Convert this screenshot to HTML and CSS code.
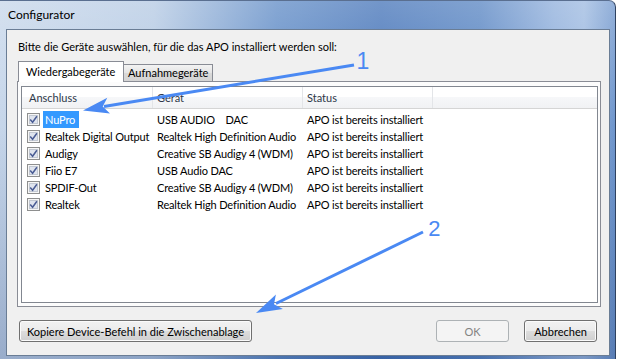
FILE: index.html
```html
<!DOCTYPE html>
<html lang="de">
<head>
    <meta charset="UTF-8">
    <title>Configurator</title>
    <link rel="stylesheet" href="styles.css">
</head>
<body>

    <svg width="0" height="0" class="defs">
        <symbol id="cb" viewBox="0 0 13 13">
            <rect x="0.5" y="0.5" width="12" height="12" fill="#f6f6f6" stroke="#8e8f8f"/>
            <rect x="2.5" y="2.5" width="8" height="8" fill="#dfe4ee" stroke="#c2c8d2"/>
            <path d="M3.2 6.4 L5.6 9.2 L9.9 3.2" fill="none" stroke="#4a5c94" stroke-width="1.5"/>
        </symbol>
    </svg>

    <div class="window">
        <div class="titlebar">Configurator</div>

        <div class="client">
            <p class="prompt">Bitte die Geräte auswählen, für die das APO installiert werden soll:</p>

            <div class="tabs">
                <div class="tab active">Wiedergabegeräte</div>
                <div class="tab">Aufnahmegeräte</div>
            </div>

            <div class="panel">
                <div class="list">
                    <div class="list-head">
                        <div class="col c1">Anschluss</div>
                        <div class="col c2">Gerät</div>
                        <div class="col c3">Status</div>
                        <div class="col c4"></div>
                    </div>
                    <div class="rows">
                        <div class="row">
                            <div class="c1"><svg class="check"><use href="#cb"/></svg><span class="name selected">NuPro</span></div>
                            <div class="c2">USB AUDIO&nbsp;&nbsp;&nbsp;&nbsp;DAC</div>
                            <div class="c3">APO ist bereits installiert</div>
                        </div>
                        <div class="row">
                            <div class="c1"><svg class="check"><use href="#cb"/></svg><span class="name">Realtek Digital Output</span></div>
                            <div class="c2">Realtek High Definition Audio</div>
                            <div class="c3">APO ist bereits installiert</div>
                        </div>
                        <div class="row">
                            <div class="c1"><svg class="check"><use href="#cb"/></svg><span class="name">Audigy</span></div>
                            <div class="c2">Creative SB Audigy 4 (WDM)</div>
                            <div class="c3">APO ist bereits installiert</div>
                        </div>
                        <div class="row">
                            <div class="c1"><svg class="check"><use href="#cb"/></svg><span class="name">Fiio E7</span></div>
                            <div class="c2">USB Audio DAC</div>
                            <div class="c3">APO ist bereits installiert</div>
                        </div>
                        <div class="row">
                            <div class="c1"><svg class="check"><use href="#cb"/></svg><span class="name">SPDIF-Out</span></div>
                            <div class="c2">Creative SB Audigy 4 (WDM)</div>
                            <div class="c3">APO ist bereits installiert</div>
                        </div>
                        <div class="row">
                            <div class="c1"><svg class="check"><use href="#cb"/></svg><span class="name">Realtek</span></div>
                            <div class="c2">Realtek High Definition Audio</div>
                            <div class="c3">APO ist bereits installiert</div>
                        </div>
                    </div>
                </div>
            </div>

            <div class="buttons">
                <button class="btn copy">Kopiere Device-Befehl in die Zwischenablage</button>
                <button class="btn ok" disabled>OK</button>
                <button class="btn cancel">Abbrechen</button>
            </div>
        </div>

        <!-- Hinweispfeile -->
        <svg class="callouts" width="617" height="359" viewBox="0 0 617 359">
            <line x1="354" y1="65" x2="104" y2="106.5" />
            <path d="M83 110.5 L107.3 97.7 L102.7 106.6 L110 113.5 Z" />
            <text x="356.5" y="68.5" font-size="23">1</text>

            <line x1="423" y1="232" x2="276" y2="303.5" />
            <path d="M256 313 L275.9 294.5 L274 304.3 L282.9 308.9 Z" />
            <text x="428.3" y="236" font-size="22">2</text>
        </svg>
    </div>

</body>
</html>
```

FILE: styles.css
```css
body {
    margin: 0;
    background: #ffffff;
    font-family: "Lato", "Noto Sans", sans-serif;
    font-size: 11px;
    color: #000;
}
.defs {
    position: absolute;
}
.window {
    position: relative;
    width: 616px;
    height: 359px;
    box-sizing: border-box;
    border-right: 1px solid #2f4260;
    border-top: 1px solid #5a6f90;
    border-radius: 0 7px 0 0;
    background:
        linear-gradient(to bottom, rgba(255,255,255,0.25), rgba(255,255,255,0) 35%, rgba(20,50,110,0.25)),
        linear-gradient(to right, #c6d6ea 0%, #b4c9e3 25%, #5f8bc6 45%, #4473b8 62%, #5784c2 78%, #8eaedb 90%, #9cb9e0 95%, #6e95cc 100%);
    overflow: hidden;
}
.titlebar {
    height: 28px;
    padding-left: 8px;
    line-height: 27px;
    font-size: 12px;
    color: #000;
}
.client {
    margin: 0 5px 0 6px;
    height: 327px;
    box-sizing: border-box;
    border: 1px solid #6a7d95;
    background: #f0f0f0;
    padding: 0 8px 0 10px;
}
.prompt {
    margin: 10px 0 0 1px;
    line-height: 14px;
}

/* Reiter */
.tabs {
    display: flex;
    align-items: flex-end;
    height: 20px;
    margin-top: 7px;
    padding-left: 1px;
}
.tab {
    box-sizing: border-box;
    border: 1px solid #898c95;
    border-bottom: none;
    height: 17px;
    width: 90px;
    line-height: 16px;
    padding-left: 4px;
    margin-left: -1px;
    background: linear-gradient(#f3f3f3, #e4e4e4 50%, #d9d9d9 50%, #d4d4d4);
}
.tab.active {
    position: relative;
    z-index: 1;
    height: 21px;
    width: 106px;
    margin-left: 0;
    margin-bottom: -1px;
    line-height: 19px;
    padding-left: 7px;
    background: #ffffff;
}
.panel {
    border: 1px solid #898c95;
    background: #fcfcfc;
    padding: 4px 2px 3px 3px;
    height: 226px;
    box-sizing: border-box;
}

/* Liste */
.list {
    height: 100%;
    box-sizing: border-box;
    border: 1px solid #828790;
    background: #ffffff;
}
.list-head,
.row {
    display: grid;
    grid-template-columns: 131px 150px 130px 1fr;
}
.list-head {
    height: 22px;
    box-sizing: border-box;
    border-bottom: 1px solid #d5d5d5;
    background: linear-gradient(#ffffff, #ffffff 50%, #f6f7f9 50%, #f1f2f4);
    color: #2d3848;
}
.list-head .col {
    border-right: 1px solid #e3e5e8;
    padding-left: 4px;
    padding-top: 1px;
    line-height: 20px;
}
.list-head .c1 {
    padding-left: 7px;
}
.list-head .c4 {
    border-right: none;
}
.rows {
    padding-top: 2px;
}
.row {
    height: 17px;
    line-height: 17px;
    white-space: nowrap;
    letter-spacing: -0.15px;
}
.row .c1 {
    display: flex;
    align-items: center;
    padding-left: 5px;
    overflow: visible;
}
.row .c2,
.row .c3 {
    padding-left: 4px;
}
.check {
    flex-shrink: 0;
    width: 13px;
    height: 13px;
    margin-right: 3px;
}
.name {
    flex-shrink: 0;
    padding: 0 2px;
}
.selected {
    background: #3399ff;
    color: #ffffff;
    padding-right: 4px;
}

/* Knöpfe */
.buttons {
    display: flex;
    margin-top: 13px;
    padding-left: 2px;
    padding-right: 4px;
}
.btn {
    height: 22px;
    width: 73px;
    box-sizing: border-box;
    border: 1px solid #707070;
    border-radius: 3px;
    background: linear-gradient(#f2f2f2, #ebebeb 50%, #dddddd 50%, #cfcfcf);
    box-shadow: inset 0 0 0 1px #fbfbfb;
    font-family: inherit;
    font-size: 11px;
    color: #000;
    padding: 0;
}
.btn.copy {
    width: 233px;
    margin-right: auto;
}
.btn.ok {
    border-color: #adb2b5;
    background: #f4f4f4;
    box-shadow: none;
    color: #838383;
    margin-right: 15px;
}

/* Pfeile */
.callouts {
    position: absolute;
    top: -1px;
    left: 0;
    pointer-events: none;
}
.callouts line {
    stroke: #4a89f3;
    stroke-width: 3;
}
.callouts path,
.callouts text {
    fill: #4a89f3;
}
.callouts text {
    font-family: "Liberation Sans", Arial, sans-serif;
}
```
